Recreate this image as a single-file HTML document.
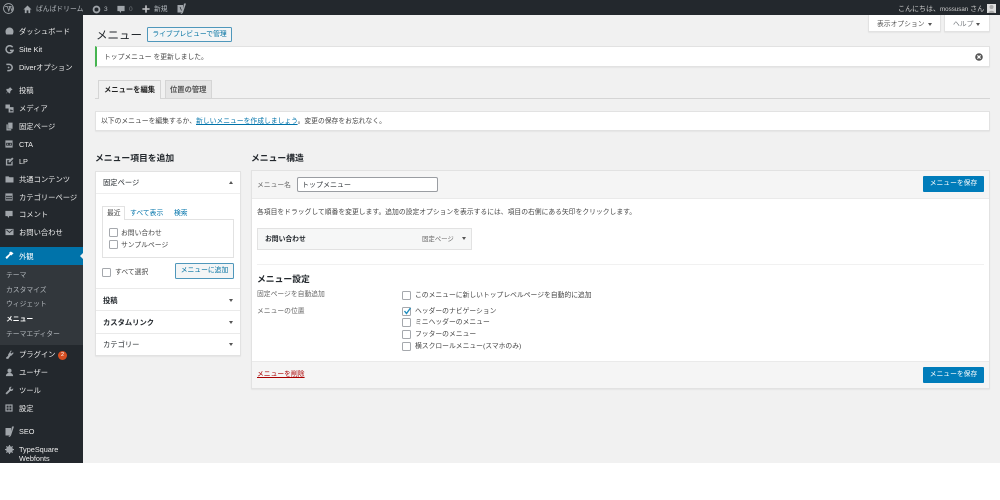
<!DOCTYPE html>
<html lang="ja"><head><meta charset="utf-8"><title>メニュー</title>
<style>
html,body{margin:0;padding:0;background:#fff}
#p{position:relative;width:1000px;height:500px;overflow:hidden;background:#fff;font-family:"Liberation Sans","Noto Sans CJK JP",sans-serif;font-size:6.8px;color:#444;filter:blur(.35px)}
#p div,#p svg{position:absolute}
.t{position:absolute;white-space:nowrap;line-height:12px;height:12px;margin-top:1px}
.s{color:#eee;font-size:7.3px}.u{color:#b4b9be}.b{font-weight:700}.l{color:#0073aa}
.m{font-size:7.3px;font-weight:700;color:#23282d}
.n{font-size:6.8px;color:#b4b9be}
.h{font-size:8.8px;font-weight:700;color:#23282d}
.cb{width:7px;height:7px;border:1px solid #a5a8ad;border-radius:1.5px;background:#fff}
.btn{background:#007cba;border-radius:1px;color:#fff;text-align:center;line-height:16px;font-size:6.8px}
.box{background:#fff;border:1px solid #e2e2e2;box-sizing:border-box;box-shadow:0 1px 1px rgba(0,0,0,.05)}
.a{width:0;height:0;border-left:2px solid transparent;border-right:2px solid transparent;border-top:3px solid #555}
.i{fill:#a0a5aa}
</style></head><body><div id="p">
<div style="left:0;top:0;width:1000px;height:463px;background:#f1f1f1"></div>
<div style="left:0;top:0;width:83px;height:463px;background:#23282d"></div>
<div style="left:0;top:0;width:1000px;height:15px;background:#23282d"></div>

<!-- admin bar -->
<svg style="left:3px;top:3px" width="11" height="11" viewBox="0 0 20 20"><circle cx="10" cy="10" r="9" fill="none" stroke="#a0a5aa" stroke-width="1.6"/><path d="M4 6.5h4l2.5 8 1.800-5-1-3h-1.200h5.500l-2 0 2.400 7.500 1.600-4c.6-2-.2-3-.8-3.500" fill="none" stroke="#a0a5aa" stroke-width="1.5"/></svg>
<svg style="left:23px;top:5px" width="9" height="9" viewBox="0 0 20 20"><path class="i" d="M10 1 1 10h3v8h4v-6h4v6h4v-8h3z"/></svg>
<span class="t u" style="left:36px;top:3px">ぱんぱドリーム</span>
<svg style="left:92px;top:5px" width="9" height="9" viewBox="0 0 20 20"><circle cx="10" cy="10" r="6.500" fill="none" stroke="#a0a5aa" stroke-width="4"/></svg>
<span class="t u" style="left:104px;top:3px;font-size:6.500px">3</span>
<svg style="left:117px;top:5px" width="8" height="9" viewBox="0 0 20 20"><path class="i" d="M1 1h18v13H10v5l-4-5H1z"/></svg>
<span class="t" style="left:129px;top:3px;font-size:6.500px;color:#72777c">0</span>
<svg style="left:142px;top:5px" width="8" height="8" viewBox="0 0 20 20"><path d="M8 1h4v7h7v4h-7v7H8v-7H1V8h7z" fill="#c3c4c7"/></svg>
<span class="t u" style="left:154px;top:3px">新規</span>
<svg style="left:177px;top:3px" width="9" height="11" viewBox="0 0 18 22"><path class="i" d="M1 4h11v15H7L1 19zM14 1h4L12 19c-1 2-3 3-5 3l1-2c1 0 2-1 2-3L6 7h3l2.500 6z"/><path d="M6 8l3 7" stroke="#23282d" stroke-width="1.500"/></svg>
<span class="t" style="left:898px;top:3px;color:#ccc;font-size:7px">こんにちは、<span style="font-size:6.200px">mossusan</span> さん</span>
<div style="left:987px;top:4px;width:9px;height:9px;background:#ddd"></div>
<svg style="left:987px;top:4px" width="9" height="9" viewBox="0 0 8 9"><circle cx="4" cy="3" r="2" fill="#aaa"/><path d="M1 9c0-3 6-3 6 0z" fill="#aaa"/></svg>

<!-- sidebar bands -->
<div style="left:0;top:247px;width:83px;height:18px;background:#0073aa"></div>
<div style="left:0;top:265px;width:83px;height:80px;background:#32373c"></div>
<div style="left:80px;top:253px;width:0;height:0;border:3px solid transparent;border-right-color:#f1f1f1;border-left:0"></div>

<!-- sidebar icons -->
<svg style="left:5px;top:27px" width="9" height="8" viewBox="0 0 20 18"><path class="i" d="M10 1a9 9 0 0 0-9 9c0 3 1 5 2 7h14c1-2 2-4 2-7a9 9 0 0 0-9-9zm0 9-1 4h2z"/></svg>
<svg style="left:5px;top:45px" width="9" height="9" viewBox="0 0 20 20"><path d="M17 5a8 8 0 1 0 1 7h-7" fill="none" stroke="#a0a5aa" stroke-width="3.400"/></svg>
<svg style="left:5px;top:63px" width="9" height="9" viewBox="0 0 20 20"><path d="M3 3h6a7 7 0 0 1 0 14H5" fill="none" stroke="#a0a5aa" stroke-width="3.400"/><circle cx="8" cy="10" r="2" fill="#a0a5aa"/></svg>
<svg style="left:5px;top:86px" width="8" height="9" viewBox="0 0 20 20"><path class="i" d="M12 1l7 7-3 1-3 4 0 4-3 0-3-4-5 6 4-7-3-3 1-3 4 0 4-3z"/></svg>
<svg style="left:5px;top:104px" width="9" height="9" viewBox="0 0 20 20"><path class="i" d="M1 1h10v9H1zM8 7h11v12H8z"/><path d="M11 16l2-5 2 3 2-1v3z" fill="#23282d"/></svg>
<svg style="left:6px;top:122px" width="7" height="9" viewBox="0 0 16 20"><path class="i" d="M5 1h10v14H5zM1 5h3v11h8v3H1z"/></svg>
<svg style="left:5px;top:140px" width="8" height="8" viewBox="0 0 20 20"><path class="i" d="M1 1h18v18H1z"/><path d="M3 7h14v7H3z" fill="#23282d"/><path class="i" d="M5 9h3v3H5zM12 9h3v3h-3z"/></svg>
<svg style="left:5px;top:157px" width="9" height="9" viewBox="0 0 20 20"><path class="i" d="M2 4h11l-3 3H5v9h9v-4l3-3v10H2z"/><path class="i" d="M16 1l3 3-8 8H8V9z"/></svg>
<svg style="left:5px;top:175px" width="9" height="8" viewBox="0 0 20 18"><path class="i" d="M1 3h7l2 2h9v12H1z"/></svg>
<svg style="left:5px;top:193px" width="8" height="8" viewBox="0 0 20 20"><path class="i" d="M1 1h18v18H1z"/><path d="M3 7h4v3H3zM8 7h4v3H8zM13 7h4v3h-4zM3 12h4v4H3zM8 12h4v4H8zM13 12h4v4h-4z" fill="#23282d"/></svg>
<svg style="left:5px;top:210px" width="8" height="9" viewBox="0 0 20 20"><path class="i" d="M1 1h18v13H10v5l-4-5H1z"/></svg>
<svg style="left:5px;top:228px" width="9" height="8" viewBox="0 0 20 18"><path class="i" d="M1 2h18v14H1z"/><path d="M3 4l7 6 7-6" fill="none" stroke="#23282d" stroke-width="2"/></svg>
<svg style="left:5px;top:251px" width="9" height="9" viewBox="0 0 20 20"><path d="M19 5l-6-4-4 3 1 2-9 8 3 4 8-9 2 1z" fill="#fff"/></svg>
<svg style="left:5px;top:350px" width="9" height="9" viewBox="0 0 20 20"><path class="i" d="M13 1l2 1-3 4 2 2 4-3 1 2-4 5-3 1-5 7-5-1 1-3 4-3 0-3z"/></svg>
<svg style="left:5px;top:368px" width="9" height="9" viewBox="0 0 20 20"><circle class="i" cx="10" cy="6" r="4.500"/><path class="i" d="M2 18c0-10 16-10 16 0z"/></svg>
<svg style="left:5px;top:386px" width="9" height="9" viewBox="0 0 20 20"><path d="M18 5l-3 3-3-3 3-3c-3-1-7 1-6 6L1 16l3 3 8-8c5 1 7-3 6-6z" class="i"/></svg>
<svg style="left:5px;top:404px" width="8" height="8" viewBox="0 0 20 20"><path class="i" d="M1 1h18v18H1z"/><path d="M4 4h5v5H4zM11 4h5v5h-5zM4 11h5v5H4zM11 11h5v5h-5z" fill="#23282d"/></svg>
<svg style="left:5px;top:426px" width="9" height="11" viewBox="0 0 18 22"><path class="i" d="M1 4h11v15H7L1 19zM14 1h4L12 19c-1 2-3 3-5 3l1-2c1 0 2-1 2-3L6 7h3l2.500 6z"/></svg>
<svg style="left:5px;top:445px" width="9" height="9" viewBox="0 0 20 20"><circle cx="10" cy="10" r="5.500" fill="none" stroke="#a0a5aa" stroke-width="4"/><path d="M10 0v20M0 10h20M3 3l14 14M17 3L3 17" stroke="#a0a5aa" stroke-width="2.500"/></svg>

<!-- sidebar text -->
<span class="t s" style="left:19px;top:25px">ダッシュボード</span>
<span class="t s" style="left:19px;top:43px">Site Kit</span>
<span class="t s" style="left:19px;top:61px">Diverオプション</span>
<span class="t s" style="left:19px;top:84px">投稿</span>
<span class="t s" style="left:19px;top:102px">メディア</span>
<span class="t s" style="left:19px;top:120px">固定ページ</span>
<span class="t s" style="left:19px;top:138px">CTA</span>
<span class="t s" style="left:19px;top:155px">LP</span>
<span class="t s" style="left:19px;top:173px">共通コンテンツ</span>
<span class="t s" style="left:19px;top:191px">カテゴリーページ</span>
<span class="t s" style="left:19px;top:208px">コメント</span>
<span class="t s" style="left:19px;top:226px">お問い合わせ</span>
<span class="t s" style="left:19px;top:250px;color:#fff">外観</span>
<span class="t n" style="left:6px;top:269px">テーマ</span>
<span class="t n" style="left:6px;top:284px">カスタマイズ</span>
<span class="t n" style="left:6px;top:298px">ウィジェット</span>
<span class="t b" style="left:6px;top:313px;color:#fff">メニュー</span>
<span class="t n" style="left:6px;top:328px">テーマエディター</span>
<span class="t s" style="left:19px;top:348px">プラグイン</span>
<div style="left:58px;top:351px;width:9px;height:9px;border-radius:50%;background:#d54e21;color:#fff;font-size:5.500px;line-height:9px;text-align:center">2</div>
<span class="t s" style="left:19px;top:366px">ユーザー</span>
<span class="t s" style="left:19px;top:384px">ツール</span>
<span class="t s" style="left:19px;top:402px">設定</span>
<span class="t s" style="left:19px;top:425px">SEO</span>
<span class="t s" style="left:19px;top:443px">TypeSquare</span>
<span class="t s" style="left:19px;top:452px">Webfonts</span>

<!-- top tabs -->
<div class="box" style="left:868px;top:15px;width:73px;height:17px;border-top:0"></div>
<span class="t" style="left:877px;top:18px;color:#555">表示オプション</span>
<div class="a" style="left:928px;top:23px"></div>
<div class="box" style="left:944px;top:15px;width:46px;height:17px;border-top:0"></div>
<span class="t" style="left:953px;top:18px;color:#72777c">ヘルプ</span>
<div class="a" style="left:976px;top:23px"></div>

<!-- title -->
<span class="t" style="left:96px;top:29px;font-size:11.500px;color:#23282d">メニュー</span>
<div style="left:147px;top:27px;width:85px;height:15px;box-sizing:border-box;border:1px solid #4f97bb;border-radius:1.500px;background:#f3f5f6;color:#0071a1;font-size:6.800px;line-height:14px;text-align:center">ライブプレビューで管理</div>

<!-- notice -->
<div class="box" style="left:95px;top:46px;width:895px;height:21px;border-left:2px solid #46b450"></div>
<span class="t" style="left:104px;top:51px">トップメニュー を更新しました。</span>
<svg style="left:975px;top:53px" width="8" height="8" viewBox="0 0 20 20"><circle cx="10" cy="10" r="9.500" fill="#555"/><path d="M6 6l8 8M14 6l-8 8" stroke="#fff" stroke-width="3"/></svg>

<!-- nav tabs -->
<div style="left:95px;top:98px;width:895px;height:1px;background:#d5d5d5"></div>
<div style="left:98px;top:80px;width:63px;height:19px;box-sizing:border-box;border:1px solid #d5d5d5;border-bottom:0;background:#f1f1f1"></div>
<span class="t m" style="left:104px;top:83px;color:#222">メニューを編集</span>
<div style="left:165px;top:80px;width:47px;height:18px;box-sizing:border-box;border:1px solid #d5d5d5;border-bottom:0;background:#e5e5e5"></div>
<span class="t" style="left:170px;top:83px;color:#555;font-size:7.300px;font-weight:700">位置の管理</span>

<!-- info -->
<div class="box" style="left:95px;top:111px;width:895px;height:20px"></div>
<span class="t" style="left:101px;top:115px">以下のメニューを編集するか、<span class="l" style="text-decoration:underline">新しいメニューを作成しましょう</span>。変更の保存をお忘れなく。</span>

<!-- left column -->
<span class="t h" style="left:95px;top:151px">メニュー項目を追加</span>
<div class="box" style="left:95px;top:171px;width:146px;height:185px"></div>
<span class="t m" style="left:103px;top:176px;font-weight:400">固定ページ</span>
<div class="a" style="left:229px;top:181px;border-top:0;border-bottom:3px solid #555"></div>
<div style="left:96px;top:193px;width:144px;height:1px;background:#eee"></div>
<div style="left:102px;top:219px;width:132px;height:39px;box-sizing:border-box;border:1px solid #e2e2e2"></div>
<div style="left:102px;top:206px;width:23px;height:14px;box-sizing:border-box;border:1px solid #e2e2e2;border-bottom:0;background:#fff"></div>
<span class="t" style="left:107px;top:207px">最近</span>
<span class="t l" style="left:130px;top:207px">すべて表示</span>
<span class="t l" style="left:174px;top:207px">検索</span>
<div class="cb" style="left:109px;top:228px"></div>
<span class="t" style="left:121px;top:227px">お問い合わせ</span>
<div class="cb" style="left:109px;top:240px"></div>
<span class="t" style="left:121px;top:239px">サンプルページ</span>
<div class="cb" style="left:102px;top:268px"></div>
<span class="t" style="left:115px;top:266px">すべて選択</span>
<div style="left:175px;top:263px;width:59px;height:16px;box-sizing:border-box;border:1px solid #4f97bb;border-radius:1.500px;background:#f3f5f6;color:#0071a1;line-height:14px;text-align:center">メニューに追加</div>
<div style="left:96px;top:288px;width:144px;height:1px;background:#eaeaea"></div>
<span class="t m" style="left:103px;top:294px">投稿</span>
<div class="a" style="left:229px;top:299px"></div>
<div style="left:96px;top:310px;width:144px;height:1px;background:#eaeaea"></div>
<span class="t m" style="left:103px;top:316px">カスタムリンク</span>
<div class="a" style="left:229px;top:321px"></div>
<div style="left:96px;top:333px;width:144px;height:1px;background:#eaeaea"></div>
<span class="t m" style="left:103px;top:338px;font-weight:400">カテゴリー</span>
<div class="a" style="left:229px;top:343px"></div>

<!-- right column -->
<span class="t h" style="left:251px;top:151px">メニュー構造</span>
<div class="box" style="left:251px;top:170px;width:739px;height:219px"></div>
<div style="left:252px;top:171px;width:737px;height:27px;background:#f5f5f5;border-bottom:1px solid #eaeaea"></div>
<span class="t" style="left:257px;top:179px;color:#666">メニュー名</span>
<div style="left:297px;top:177px;width:141px;height:15px;box-sizing:border-box;border:1px solid #9a9da2;border-radius:2px;background:#fff"></div>
<span class="t" style="left:302px;top:179px;font-size:7px;color:#32373c">トップメニュー</span>
<div class="btn" style="left:923px;top:176px;width:61px;height:16px">メニューを保存</div>
<span class="t" style="left:257px;top:206px">各項目をドラッグして順番を変更します。追加の設定オプションを表示するには、項目の右側にある矢印をクリックします。</span>
<div style="left:257px;top:228px;width:215px;height:22px;box-sizing:border-box;border:1px solid #e2e2e2;background:#f6f7f7"></div>
<span class="t b" style="left:265px;top:233px;color:#23282d">お問い合わせ</span>
<span class="t" style="left:422px;top:233px;color:#666;font-size:6.400px">固定ページ</span>
<div class="a" style="left:462px;top:237px"></div>
<div style="left:257px;top:264px;width:727px;height:1px;background:#f1f1f1"></div>
<span class="t h" style="left:257px;top:272px">メニュー設定</span>
<span class="t" style="left:257px;top:288px;color:#666">固定ページを自動追加</span>
<div class="cb" style="left:402px;top:291px"></div>
<span class="t" style="left:415px;top:289px">このメニューに新しいトップレベルページを自動的に追加</span>
<span class="t" style="left:257px;top:305px;color:#666">メニューの位置</span>
<div class="cb" style="left:402px;top:307px"></div>
<svg style="left:403px;top:307px" width="9" height="8" viewBox="0 0 9 8"><path d="M1.500 4l2 2.500L7.500 1" fill="none" stroke="#1e8cbe" stroke-width="1.400"/></svg>
<span class="t" style="left:415px;top:305px">ヘッダーのナビゲーション</span>
<div class="cb" style="left:402px;top:318px"></div>
<span class="t" style="left:415px;top:316px">ミニヘッダーのメニュー</span>
<div class="cb" style="left:402px;top:330px"></div>
<span class="t" style="left:415px;top:328px">フッターのメニュー</span>
<div class="cb" style="left:402px;top:342px"></div>
<span class="t" style="left:415px;top:340px">横スクロールメニュー(スマホのみ)</span>
<div style="left:252px;top:361px;width:737px;height:27px;background:#f5f5f5;border-top:1px solid #eaeaea;box-sizing:border-box"></div>
<span class="t" style="left:257px;top:368px;color:#a00;text-decoration:underline">メニューを削除</span>
<div class="btn" style="left:923px;top:367px;width:61px;height:16px">メニューを保存</div>
</div></body></html>
